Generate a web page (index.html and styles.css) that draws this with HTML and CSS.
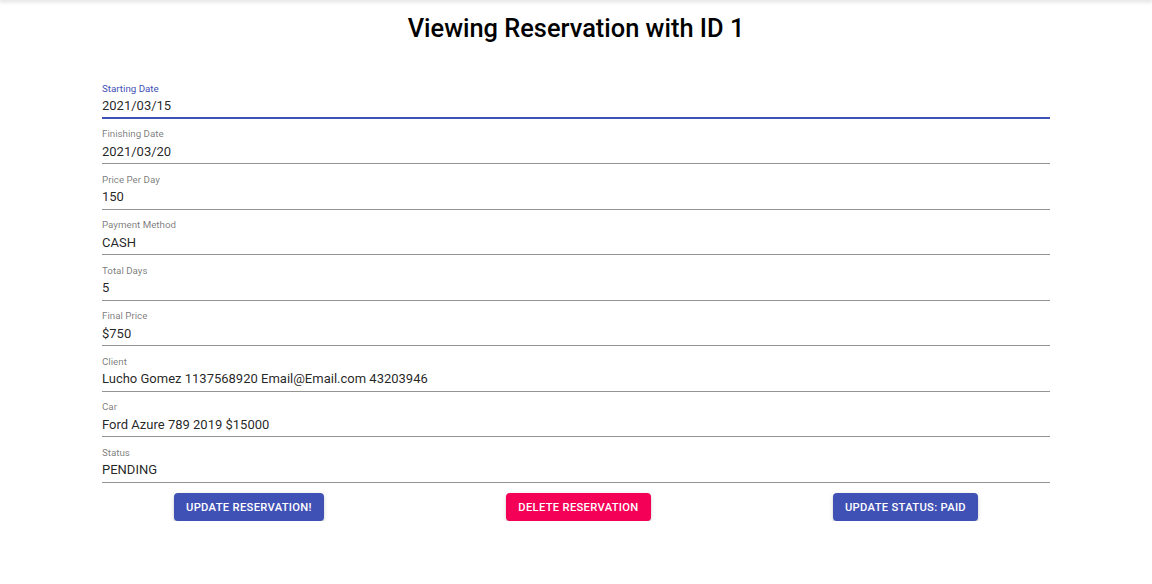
FILE: index.html
```html
<!DOCTYPE html>
<html lang="en">
<head>
<meta charset="utf-8">
<title>Viewing Reservation</title>
<link rel="stylesheet" href="styles.css">
</head>
<body>
<div class="topbar"></div>
<h1 class="title">Viewing Reservation with ID 1</h1>
<form class="form">
  <div class="field focused"><label class="label">Starting Date</label><div class="input">2021/03/15</div></div>
  <div class="field"><label class="label">Finishing Date</label><div class="input">2021/03/20</div></div>
  <div class="field"><label class="label">Price Per Day</label><div class="input">150</div></div>
  <div class="field"><label class="label">Payment Method</label><div class="input">CASH</div></div>
  <div class="field"><label class="label">Total Days</label><div class="input">5</div></div>
  <div class="field"><label class="label">Final Price</label><div class="input">$750</div></div>
  <div class="field"><label class="label">Client</label><div class="input">Lucho Gomez 1137568920 Email@Email.com 43203946</div></div>
  <div class="field"><label class="label">Car</label><div class="input">Ford Azure 789 2019 $15000</div></div>
  <div class="field"><label class="label">Status</label><div class="input">PENDING</div></div>
  <div class="actions">
    <button type="button" class="btn btn-primary">Update Reservation!</button>
    <button type="button" class="btn btn-secondary">Delete Reservation</button>
    <button type="button" class="btn btn-primary">Update Status: Paid</button>
  </div>
</form>
</body>
</html>
```

FILE: styles.css
```css
html, body {
  margin: 0;
  padding: 0;
  background: #fff;
  font-family: Roboto, "Liberation Sans", sans-serif;
}

.topbar {
  height: 0;
  box-shadow: 0 0 4px 1px rgba(0, 0, 0, 0.25);
}

.title {
  margin: 0;
  padding-top: 12px;
  height: 73px;
  box-sizing: border-box;
  text-align: center;
  font-size: 25.4px;
  font-weight: 500;
  line-height: 32px;
  color: #000;
}

.form {
  width: 948px;
  margin: 0 auto;
}

.field {
  display: flex;
  flex-direction: column;
  border-bottom: 1px solid rgba(0, 0, 0, 0.42);
}

.label {
  display: block;
  margin-top: 10.5px;
  height: 9.75px;
  font-size: 9.75px;
  line-height: 9.75px;
  color: rgba(0, 0, 0, 0.54);
}

.input {
  height: 15.5px;
  padding: 5px 0 3.75px;
  font-size: 13px;
  line-height: 15.5px;
  color: rgba(0, 0, 0, 0.87);
  white-space: nowrap;
}

.field.focused {
  border-bottom: 2px solid #3f51b5;
}

.field.focused .label {
  margin-top: 11px;
  color: #3f51b5;
}

.field.focused .input {
  padding: 4px 0 3.25px;
}

.actions {
  display: flex;
  justify-content: space-between;
  padding: 10px 72px 0;
}

.btn {
  border: 0;
  border-radius: 4px;
  padding: 1px 12px 0;
  height: 28px;
  font-family: Roboto, "Liberation Sans", sans-serif;
  font-size: 11.2px;
  font-weight: 500;
  letter-spacing: 0.02857em;
  text-transform: uppercase;
  color: #fff;
  box-shadow: 0 3px 1px -2px rgba(0, 0, 0, 0.2), 0 2px 2px 0 rgba(0, 0, 0, 0.14), 0 1px 5px 0 rgba(0, 0, 0, 0.12);
  cursor: pointer;
}

.btn-primary {
  background: #3f51b5;
}

.btn-secondary {
  background: #f50057;
}
```
